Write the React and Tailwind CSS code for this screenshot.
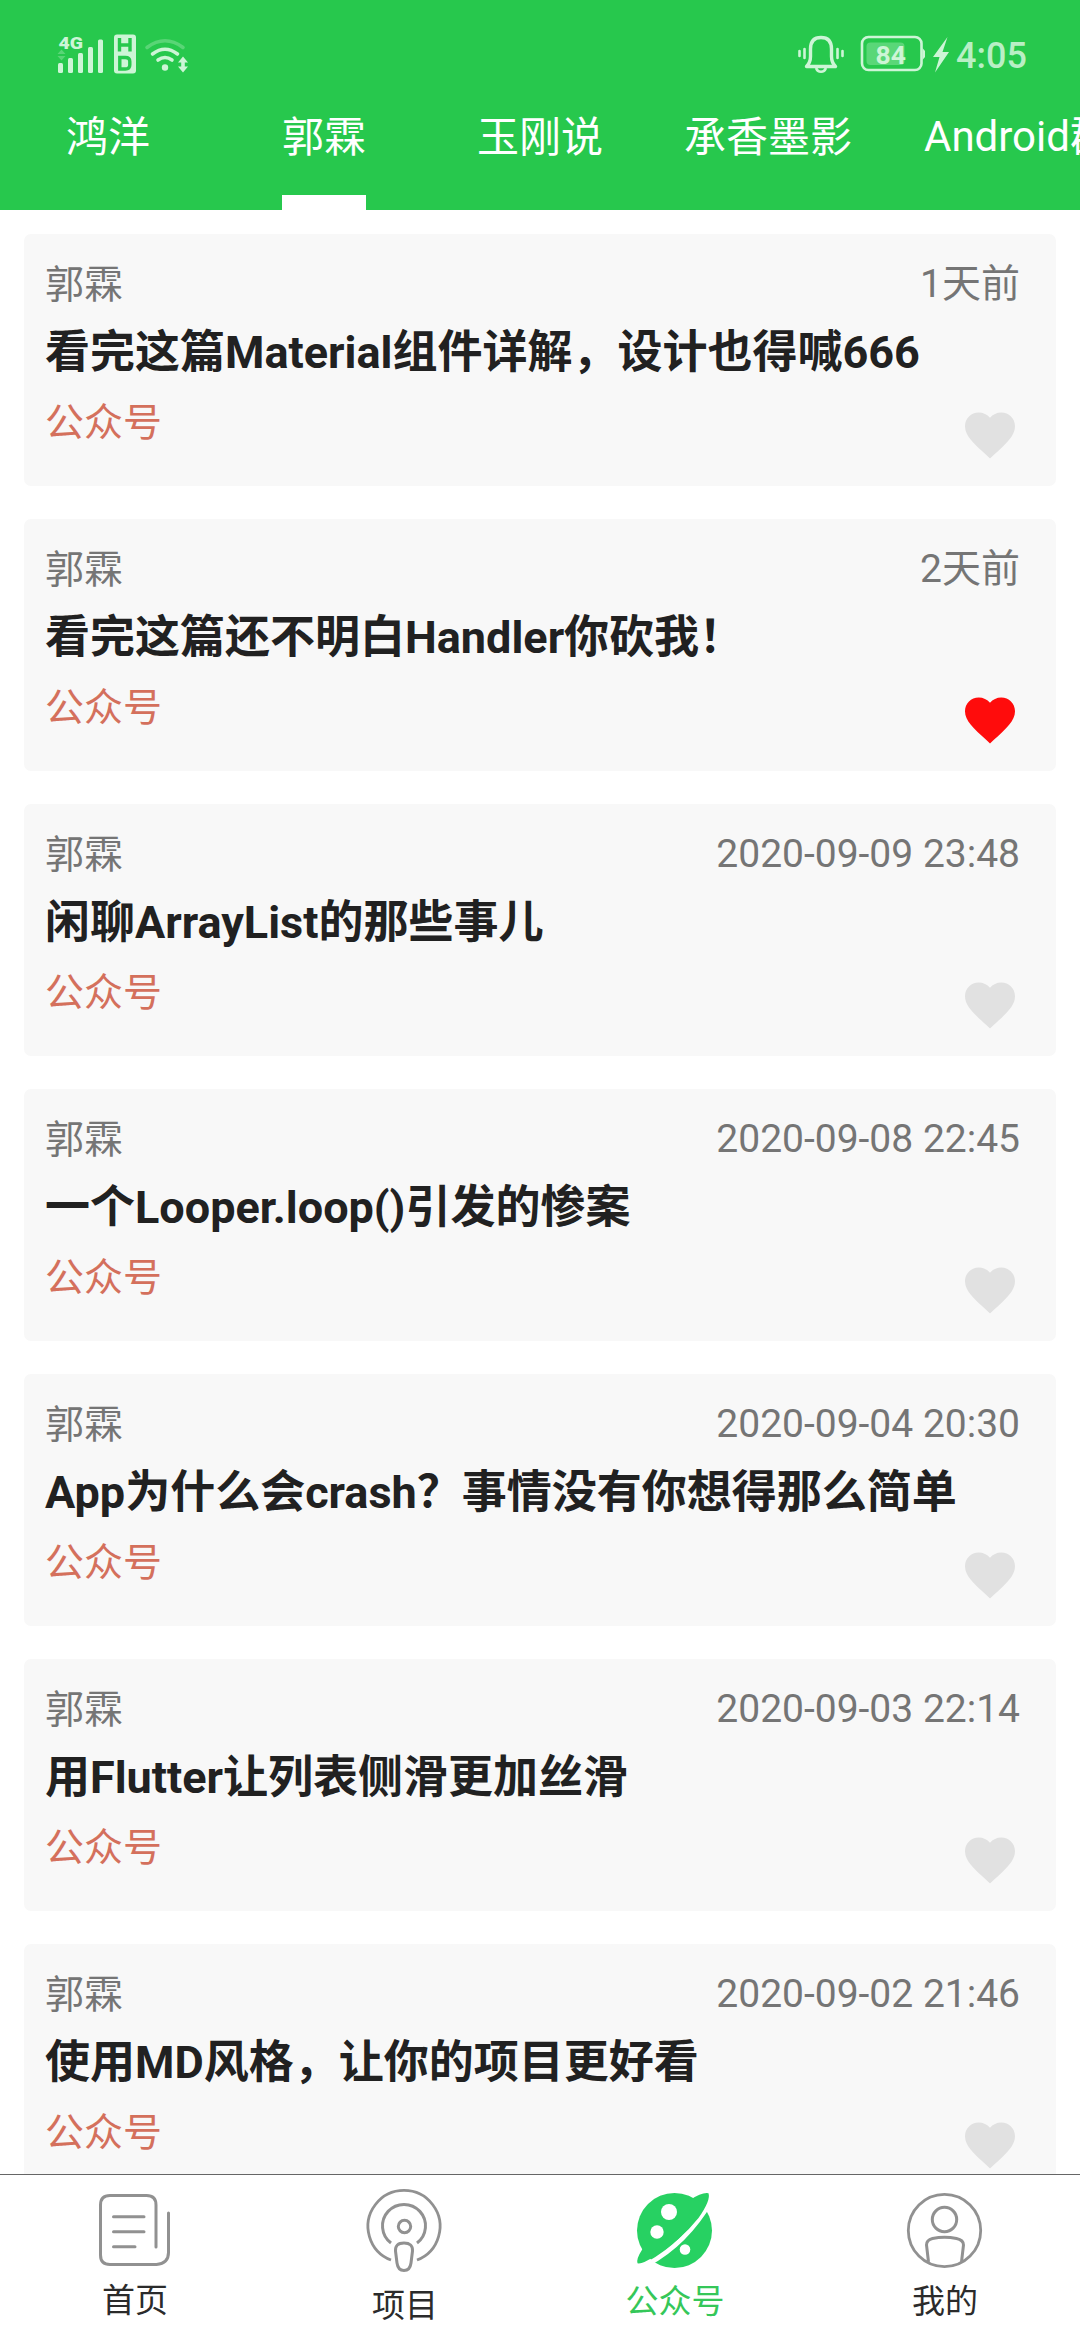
const HEART =
  "M12 21.35l-1.45-1.32C5.4 15.36 2 12.28 2 8.5 2 5.42 4.42 3 7.5 3c1.74 0 3.41.81 4.5 2.09C13.09 3.81 14.76 3 16.5 3 19.58 3 22 5.42 22 8.5c0 3.78-3.4 6.86-8.55 11.54L12 21.35z";

const tabs = ["鸿洋", "郭霖", "玉刚说", "承香墨影", "Android群英传"];

const articles = [
  { title: "看完这篇Material组件详解，设计也得喊666", time: "1天前" },
  { title: "看完这篇还不明白Handler你砍我！", time: "2天前", liked: true },
  { title: "闲聊ArrayList的那些事儿", time: "2020-09-09 23:48" },
  { title: "一个Looper.loop()引发的惨案", time: "2020-09-08 22:45" },
  { title: "App为什么会crash？事情没有你想得那么简单", time: "2020-09-04 20:30" },
  { title: "用Flutter让列表侧滑更加丝滑", time: "2020-09-03 22:14" },
  { title: "使用MD风格，让你的项目更好看", time: "2020-09-02 21:46" },
];

function SignalIcons() {
  return (
    <svg width="170" height="70" viewBox="0 0 170 70" fill="#cdf5d6">
      <text x="18.5" y="28.5" fontSize="16.5" fontWeight="900" fontFamily="Roboto" textLength="24.5" lengthAdjust="spacingAndGlyphs">4G</text>
      <path d="M21.5 29.500l4 4.500h-8zM21.500 40.500l4-4.500h-8z" opacity="0.3" />
      <rect x="18" y="43" width="5" height="10" rx="1.500" />
      <rect x="28" y="38" width="5" height="15" rx="1.500" />
      <rect x="38" y="33" width="5" height="20" rx="1.500" />
      <rect x="48" y="27" width="5" height="26" rx="1.500" />
      <rect x="58" y="19.500" width="5" height="33.500" rx="1.500" />
      <rect x="74" y="14.500" width="22" height="39" rx="3" />
      <path d="M79.500 18v13.500M90 18v13.500M79.500 25H90" stroke="#27c84d" strokeWidth="3.400" fill="none" />
      <path d="M79.800 37.500v11.500h5.500q4.500 0 4.500-4v-3.500q0-4-4.500-4z" stroke="#27c84d" strokeWidth="3.400" fill="none" />
      <g fill="none" stroke="#cdf5d6" strokeWidth="3.600" strokeLinecap="round">
        <path d="M107 27.500Q125 14 143 27.500" opacity="0.3" />
        <path d="M112.500 34Q125 24.500 137.500 34" />
        <path d="M118 40Q125 35 132 40" />
      </g>
      <circle cx="125" cy="47.500" r="3.200" />
      <path d="M143 36.500l5 6h-3.200v4h3.200l-5 6-5-6h3.200v-4H138z" />
    </svg>
  );
}

function BatteryIcons() {
  return (
    <svg width="170" height="70" viewBox="0 0 170 70" fill="none">
      <g stroke="#cdf5d6" strokeWidth="3.400">
        <path d="M26.500 46.500q4-4 4-10V29q0-11.500 10.500-11.500T51.500 29v7.500q0 6 4 10z" strokeLinejoin="round" />
        <path d="M36 48q1.500 3.800 5 3.800t5-3.800" strokeWidth="2.600" />
        <path d="M24.500 29v9M57.500 29v9M19.500 31v5M62.500 31v5" strokeWidth="2.600" strokeLinecap="round" />
      </g>
      <rect x="82" y="17" width="59.500" height="33" rx="6.500" stroke="#cdf5d6" strokeWidth="2.600" />
      <path d="M142.500 28l2.500 3v6l-2.500 3z" fill="#cdf5d6" />
      <rect x="86.500" y="22.500" width="38" height="22.500" rx="4" fill="#5ad778" />
      <text x="95.500" y="43.700" fontSize="26.500" fontWeight="700" fontFamily="Roboto" fill="#cdf5d6">84</text>
      <path d="M167.500 17L153 37h6.500L155 52.500 169 32h-6.500z" fill="#cdf5d6" />
    </svg>
  );
}

function HomeIcon() {
  return (
    <svg width="90" height="90" viewBox="0 0 90 90" fill="none" stroke="#919191" strokeWidth="3" strokeLinecap="round">
      <path d="M66 62V20q0-9.500-9.500-9.500H20q-9.500 0-9.500 9.500v50q0 9.500 9.500 9.500h46.500q12-1 12-12V28" />
      <path d="M23.500 31.700h30.500M23.500 46.700h30.500M23.500 61.700h21.500" />
    </svg>
  );
}

function ProjectIcon() {
  return (
    <svg width="90" height="100" viewBox="0 0 90 100" fill="none" stroke="#919191" strokeWidth="3">
      <path d="M31 80A36 36 0 1 1 57 80" strokeWidth="2.800" />
      <path d="M31 63A21.500 21.500 0 1 1 57 63" />
      <circle cx="44.500" cy="46.500" r="6.200" />
      <path d="M44 63q9 0 8.500 8l-1.500 12q-1 7.500-7 7.500t-7-7.500l-1.500-12q-.5-8 8.500-8z" />
    </svg>
  );
}

function PlanetIcon() {
  return (
    <svg width="90" height="90" viewBox="0 0 90 90" fill="#27d162">
      <circle cx="44.500" cy="45.500" r="37.500" />
      <path d="M81 16Q56 58.500 18 79" stroke="#fff" strokeWidth="4.600" fill="none" />
      <path d="M60 15Q72 7 78.500 8.200Q81 15 68.500 33Q50 56 25 71Q12 79.500 7.500 78.300Q6 74 12.500 64z" />
      <circle cx="39" cy="27" r="8" fill="#fff" />
      <circle cx="27" cy="47" r="6.700" fill="#fff" />
      <circle cx="55" cy="64.500" r="5.300" fill="#fff" />
    </svg>
  );
}

function MineIcon() {
  return (
    <svg width="90" height="90" viewBox="0 0 90 90" fill="none" stroke="#919191" strokeWidth="3">
      <circle cx="44.500" cy="45.500" r="36.200" strokeWidth="2.800" />
      <circle cx="44.500" cy="34.500" r="12.200" />
      <path d="M28.500 77l-2-17q0-5 6-6.500 12-2.500 24 0 7 1.500 7 6.500l-2 17" />
    </svg>
  );
}

const navItems = [
  { label: "首页", Icon: HomeIcon, box: "mt-[10px]", gap: "mt-[6px]", color: "text-[#2b2b2b]" },
  { label: "项目", Icon: ProjectIcon, box: "mt-[5px]", gap: "mt-[6px]", color: "text-[#2b2b2b]" },
  { label: "公众号", Icon: PlanetIcon, box: "mt-[10px]", gap: "mt-[7px]", color: "text-[#35c759]" },
  { label: "我的", Icon: MineIcon, box: "mt-[10px]", gap: "mt-[7px]", color: "text-[#2b2b2b]" },
];

function ArticleCard({ title, time, liked }) {
  return (
    <article className="flex h-[252px] shrink-0 flex-col rounded-[7px] bg-[#f8f8f8] pt-[27px] pr-9 pl-[21px]">
      <div className="flex h-[46px] justify-between text-[39px] leading-[46px] text-[#757575]">
        <span className="mt-px">郭霖</span>
        <time>{time}</time>
      </div>
      <h2 className="mt-[19px] text-[45px] leading-[53px] font-bold whitespace-nowrap text-[#212121]">{title}</h2>
      <div className="flex justify-between">
        <span className="mt-[21px] text-[39px] leading-[46px] text-[#d4705c]">公众号</span>
        <svg className={liked ? "mt-[26px] text-[#ff0c0c]" : "mt-[26px] text-[#e1e1e1]"} width="60" height="60" viewBox="0 0 24 24" fill="currentColor">
          <path d={HEART} />
        </svg>
      </div>
    </article>
  );
}

export default function App() {
  return (
    <div className="flex h-[2340px] w-[1080px] flex-col overflow-hidden bg-white font-[Roboto,'Noto_Sans_CJK_SC',sans-serif]">
      <header className="flex h-[210px] shrink-0 flex-col bg-[#27c84d]">
        <div className="flex h-[98px] shrink-0 items-start pt-5 pl-10">
          <SignalIcons />
          <div className="ml-[570px] flex">
            <BatteryIcons />
            <span className="mt-[15px] ml-1.5 text-[36px] leading-[42px] font-medium text-[#b9efc5]">4:05</span>
          </div>
        </div>
        <nav className="flex w-[1080px] grow overflow-hidden text-[42px] leading-[49px] whitespace-nowrap text-white">
          {tabs.map((tab) => (
            <div key={tab} className="flex min-w-[216px] shrink-0 flex-col items-center px-9">
              <div className={tab.startsWith("Android") ? "flex h-full flex-col justify-between pt-[14px]" : "flex h-full flex-col justify-between pt-[15px]"}>
                <span>{tab}</span>
                {tab === "郭霖" && <span className="h-[15px] bg-white" />}
              </div>
            </div>
          ))}
        </nav>
      </header>
      <main className="flex min-h-0 grow flex-col gap-[33px] overflow-hidden px-6 pt-6">
        {articles.map((article) => (
          <ArticleCard key={article.title} {...article} />
        ))}
      </main>
      <footer className="grid h-[166px] shrink-0 grid-cols-4 border-t border-[#666]">
        {navItems.map(({ label, Icon, box, gap, color }) => (
          <div key={label} className="flex flex-col items-center">
            <div className={box}>
              <Icon />
            </div>
            <span className={`${gap} ${color} text-[33px] leading-[39px]`}>{label}</span>
          </div>
        ))}
      </footer>
    </div>
  );
}
